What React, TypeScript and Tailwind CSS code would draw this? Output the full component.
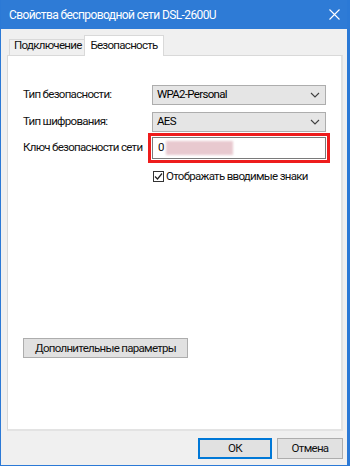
import React from "react";

const font = { fontFamily: 'Roboto, "Liberation Sans", Arial, sans-serif' };

function Chevron() {
  return (
    <svg width="10" height="6" viewBox="0 0 10 6" className="shrink-0">
      <path d="M1 1 L5 5 L9 1" fill="none" stroke="#404040" strokeWidth="1.1" />
    </svg>
  );
}

function Combo({ value }: { value: string }) {
  return (
    <div className="flex-1 h-[20px] bg-[#e5e5e5] border border-[#adadad] flex items-center pl-[4px] pr-[5px] text-black">
      <span className="flex-1 whitespace-nowrap">{value}</span>
      <Chevron />
    </div>
  );
}

export default function App() {
  return (
    <div
      className="w-[350px] h-[466px] flex flex-col bg-[#f0f0f0] border-l border-r-[3px] border-b border-[#2b79d6] text-[11.5px] tracking-[-0.7px] text-[#111111] whitespace-nowrap"
      style={font}
    >
      {/* title bar */}
      <div className="h-[29px] bg-[#2e7bd6] flex items-center pl-[8px] pr-[7px] shrink-0">
        <span className="flex-1 text-white text-[12px] tracking-[-0.6px]">Свойства беспроводной сети DSL-2600U</span>
        <svg width="11" height="11" viewBox="0 0 11 11">
          <path d="M0.5 0.5 L10.5 10.5 M10.5 0.5 L0.5 10.5" stroke="#ffffff" strokeWidth="1.1" />
        </svg>
      </div>

      <div className="flex-1 flex flex-col pl-[6px] pr-[4px] pt-[6px] pb-[6px]">
        {/* tabs */}
        <div className="flex items-end h-[20px] pl-[2px] relative z-10">
          <div className="h-[16px] pl-[4px] bg-[#f0f0f0] border border-b-0 border-[#d9d9d9] flex items-end pb-[1px] w-[76px]">
            Подключение
          </div>
          <div className="h-[21px] -mb-[1px] bg-white border border-b-0 border-[#d9d9d9] flex items-center justify-center w-[80px] -ml-[1px]">
            Безопасность
          </div>
        </div>

        {/* panel */}
        <div className="h-[376px] bg-white border border-[#d9d9d9] border-r-[2px] border-b-[2px] border-r-[#e3e3e3] border-b-[#e3e3e3] flex flex-col pl-[15px] pr-[15px] pt-[29px]">
          <div className="flex items-center h-[20px]">
            <span className="w-[129px]">Тип безопасности:</span>
            <Combo value="WPA2-Personal" />
          </div>
          <div className="flex items-center h-[20px] mt-[7px]">
            <span className="w-[129px]">Тип шифрования:</span>
            <Combo value="AES" />
          </div>
          <div className="flex items-center mt-[1px]">
            <span className="w-[125px]">Ключ безопасности сети</span>
            <div className="flex-1 border-[3px] border-[#ee1c1c] p-[1px] bg-white -mr-[4px]">
              <div className="h-[22px] border border-[#7a7a7a] flex items-center pl-[5px]">
                <span>0</span>
                <div className="ml-[2px] w-[67px] h-[14px] bg-[#e8c9cf] blur-[1px]" />
              </div>
            </div>
          </div>
          <div className="flex items-center mt-[5px] pl-[130px]">
            <div className="w-[11px] h-[11px] border border-[#333333] bg-white flex items-center justify-center">
              <svg width="9" height="9" viewBox="0 0 9 9">
                <path d="M1 4.5 L3.5 7 L8 1.5" fill="none" stroke="#222222" strokeWidth="1.2" />
              </svg>
            </div>
            <span className="ml-[2px]">Отображать вводимые знаки</span>
          </div>

          <div className="mt-[153px]">
            <button className="w-[165px] h-[20px] bg-[#e1e1e1] border border-[#adadad] flex items-center justify-center">
              Дополнительные параметры
            </button>
          </div>
        </div>

        {/* footer */}
        <div className="flex justify-end gap-[5px] mt-[7px]">
          <button className="w-[74px] h-[21px] bg-[#e1e1e1] border-2 border-[#0078d7] flex items-center justify-center">
            ОК
          </button>
          <button className="w-[66px] h-[21px] bg-[#e1e1e1] border border-[#adadad] flex items-center justify-center">
            Отмена
          </button>
        </div>
      </div>
    </div>
  );
}
